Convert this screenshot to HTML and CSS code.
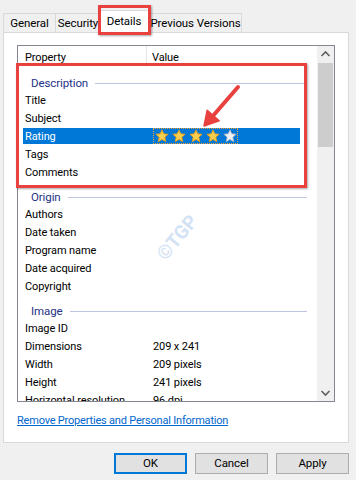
FILE: index.html
```html
<!DOCTYPE html>
<html>
<head>
<meta charset="utf-8">
<link rel="stylesheet" href="styles.css">
</head>
<body>
<div class="window">
  <div class="tabs">
    <div class="tab t-general">General</div>
    <div class="tab t-security">Security</div>
    <div class="tab t-details active">Details</div>
    <div class="tab t-prev">Previous Versions</div>
  </div>
  <div class="panel">
    <div class="list">
      <div class="list-main">
        <div class="header">
          <div class="col-prop">Property</div>
          <div class="col-val">Value</div>
        </div>
        <div class="group"><span>Description</span><i class="gline"></i></div>
        <div class="row"><div class="cell"><span class="p">Title</span><span class="v"></span></div></div>
        <div class="row"><div class="cell"><span class="p">Subject</span><span class="v"></span></div></div>
        <div class="row selected"><div class="cell"><span class="p">Rating</span>
          <span class="v stars">
            <svg class="star" viewBox="0 0 24 24"><polygon class="gold" points="12,1.5 15.1,8.3 22.5,9 16.9,14 18.5,21.8 12,17.8 5.5,21.8 7.1,14 1.5,9 8.9,8.3"/></svg>
            <svg class="star" viewBox="0 0 24 24"><polygon class="gold" points="12,1.5 15.1,8.3 22.5,9 16.9,14 18.5,21.8 12,17.8 5.5,21.8 7.1,14 1.5,9 8.9,8.3"/></svg>
            <svg class="star" viewBox="0 0 24 24"><polygon class="gold" points="12,1.5 15.1,8.3 22.5,9 16.9,14 18.5,21.8 12,17.8 5.5,21.8 7.1,14 1.5,9 8.9,8.3"/></svg>
            <svg class="star" viewBox="0 0 24 24"><polygon class="gold" points="12,1.5 15.1,8.3 22.5,9 16.9,14 18.5,21.8 12,17.8 5.5,21.8 7.1,14 1.5,9 8.9,8.3"/></svg>
            <svg class="star" viewBox="0 0 24 24"><polygon class="silver" points="12,1.5 15.1,8.3 22.5,9 16.9,14 18.5,21.8 12,17.8 5.5,21.8 7.1,14 1.5,9 8.9,8.3"/></svg>
          </span></div></div>
        <div class="row"><div class="cell"><span class="p">Tags</span><span class="v"></span></div></div>
        <div class="row"><div class="cell"><span class="p">Comments</span><span class="v"></span></div></div>
        <div class="group"><span>Origin</span><i class="gline"></i></div>
        <div class="row"><div class="cell"><span class="p">Authors</span><span class="v"></span></div></div>
        <div class="row"><div class="cell"><span class="p">Date taken</span><span class="v"></span></div></div>
        <div class="row"><div class="cell"><span class="p">Program name</span><span class="v"></span></div></div>
        <div class="row"><div class="cell"><span class="p">Date acquired</span><span class="v"></span></div></div>
        <div class="row"><div class="cell"><span class="p">Copyright</span><span class="v"></span></div></div>
        <div class="group"><span>Image</span><i class="gline"></i></div>
        <div class="row"><div class="cell"><span class="p">Image ID</span><span class="v"></span></div></div>
        <div class="row"><div class="cell"><span class="p">Dimensions</span><span class="v">209 x 241</span></div></div>
        <div class="row"><div class="cell"><span class="p">Width</span><span class="v">209 pixels</span></div></div>
        <div class="row"><div class="cell"><span class="p">Height</span><span class="v">241 pixels</span></div></div>
        <div class="row"><div class="cell"><span class="p">Horizontal resolution</span><span class="v">96 dpi</span></div></div>
      </div>
      <div class="scrollbar">
        <div class="sb-arrow"><svg viewBox="0 0 17 17"><polyline points="4.5,10 8.5,6 12.5,10"/></svg></div>
        <div class="sb-track"><div class="sb-thumb"></div></div>
        <div class="sb-arrow"><svg viewBox="0 0 17 17"><polyline points="4.5,7 8.5,11 12.5,7"/></svg></div>
      </div>
    </div>
    <a class="link" href="#">Remove Properties and Personal Information</a>
  </div>
  <div class="buttons">
    <div class="btn default">OK</div>
    <div class="btn">Cancel</div>
    <div class="btn">Apply</div>
  </div>

  <div class="watermark">©TGP</div>
  <div class="redbox box-tab"></div>
  <div class="redbox box-desc"></div>
  <svg class="arrow" viewBox="0 0 50 55" width="50" height="55">
    <line x1="43" y1="7" x2="17" y2="37" />
    <polygon points="9,46 24.2,40.7 12.2,30.2" />
  </svg>
</div>
</body>
</html>
```

FILE: styles.css
```css
* { box-sizing: border-box; }
html, body { margin: 0; padding: 0; }
body {
  width: 356px;
  height: 480px;
  background: #f0f0f0;
  font-family: Roboto, "Liberation Sans", sans-serif;
  font-size: 11px;
  letter-spacing: -0.1px;
  color: #000;
  overflow: hidden;
}
.window { position: relative; width: 356px; height: 480px; }

/* tabs */
.tabs {
  display: flex;
  align-items: flex-end;
  height: 33px;
  padding-left: 3px;
  position: relative;
  z-index: 2;
  font-size: 11.5px;
}
.tab {
  height: 19px;
  border: 1px solid #d9d9d9;
  border-bottom: 0;
  background: #f0f0f0;
  text-align: center;
  line-height: 19px;
  margin-right: -1px;
  margin-bottom: 1px;
  white-space: nowrap;
}
.t-general { width: 53px; }
.t-security { width: 46px; }
.t-details { width: 49px; }
.t-prev { width: 93px; }
.tab.active {
  height: 24px;
  background: #fff;
  margin: 0 -1px -1px -2px;
  width: 52px;
  line-height: 20px;
  position: relative;
  z-index: 2;
}

/* panel */
.panel {
  margin-left: 3px;
  margin-top: -1px;
  width: 346px;
  height: 411px;
  background: #fff;
  border: 1px solid #d9d9d9;
  padding: 12px 0 0 13px;
}
.list {
  width: 318px;
  height: 357px;
  border: 1px solid #828790;
  display: flex;
  overflow: hidden;
}
.list-main {
  flex: 1;
  overflow: hidden;
}
.header {
  display: flex;
  height: 21px;
  padding-top: 3px;
  line-height: 18px;
}
.col-prop {
  width: 129px;
  padding-left: 7px;
  border-right: 1px solid #e5e5e5;
  margin-top: -3px;
  padding-top: 3px;
}
.col-val { padding-left: 5px; }

.group {
  height: 24px;
  padding: 7px 10px 0 13px;
  display: flex;
  align-items: center;
  line-height: 14px;
  color: #1e3287;
  font-size: 11.5px;
}
.group span { height: 14px; line-height: 14px; }
.gline {
  flex: 1;
  height: 1px;
  background: #bcc6e0;
  margin-left: 7px;
  margin-top: 1px;
}
.row {
  height: 18px;
  padding: 1px 17px 1px 5px;
}
.cell {
  height: 16px;
  display: flex;
  align-items: center;
  white-space: nowrap;
}
.p { width: 130px; padding-left: 2px; flex: none; }
.v { padding-left: 0; }
.selected .cell { background: #0078d7; color: #fff; }
.stars {
  display: flex;
  height: 16px;
  width: 85px;
  border: 1px dotted #f0a030;
  align-items: center;
  padding-left: 1px;
  gap: 3px;
}
.star { width: 14px; height: 14px; display: block; }
.gold { fill: #f9cf4f; stroke: #e39a1b; stroke-width: 1.5; stroke-linejoin: round; }
.silver { fill: #eef1f6; stroke: #aab4c4; stroke-width: 1.5; stroke-linejoin: round; }

/* scrollbar */
.scrollbar {
  width: 17px;
  flex: none;
  background: #f0f0f0;
  display: flex;
  flex-direction: column;
}
.sb-arrow { height: 17px; }
.sb-arrow svg { width: 17px; height: 17px; display: block; }
.sb-arrow polyline { fill: none; stroke: #606060; stroke-width: 1.6; }
.sb-track { flex: 1; padding: 0 1px; }
.sb-thumb { height: 84px; background: #cdcdcd; }

.link {
  display: block;
  margin-top: 11px;
  line-height: 16px;
  color: #0066cc;
  text-decoration: underline;
  width: max-content;
  letter-spacing: -0.2px;
}

/* buttons */
.buttons {
  display: flex;
  justify-content: flex-end;
  gap: 8px;
  padding-right: 7px;
  margin-top: 10px;
}
.btn {
  width: 73px;
  height: 21px;
  background: #e1e1e1;
  border: 1px solid #adadad;
  text-align: center;
  line-height: 19px;
  font-size: 11.5px;
}
.btn.default { border: 2px solid #0078d7; line-height: 17px; }

/* annotations */
.redbox {
  position: absolute;
  border: 3px solid #e8413e;
  box-shadow: 1px 1px 2px rgba(0,0,0,0.35);
  z-index: 5;
}
.box-tab { left: 98px; top: 5px; width: 53px; height: 30px; }
.box-desc { left: 16px; top: 63px; width: 291px; height: 125px; }
.arrow {
  position: absolute;
  left: 195px;
  top: 80px;
  z-index: 6;
}
.arrow line { stroke: #e8413e; stroke-width: 4; stroke-linecap: round; }
.arrow polygon { fill: #e8413e; stroke: #e8413e; stroke-width: 1.5; stroke-linejoin: round; }
.watermark {
  position: absolute;
  left: 149px;
  top: 226px;
  width: 56px;
  text-align: center;
  font-weight: bold;
  font-size: 19px;
  letter-spacing: 0;
  color: #d3e2f4;
  transform: rotate(-50deg);
  z-index: 4;
}
```
